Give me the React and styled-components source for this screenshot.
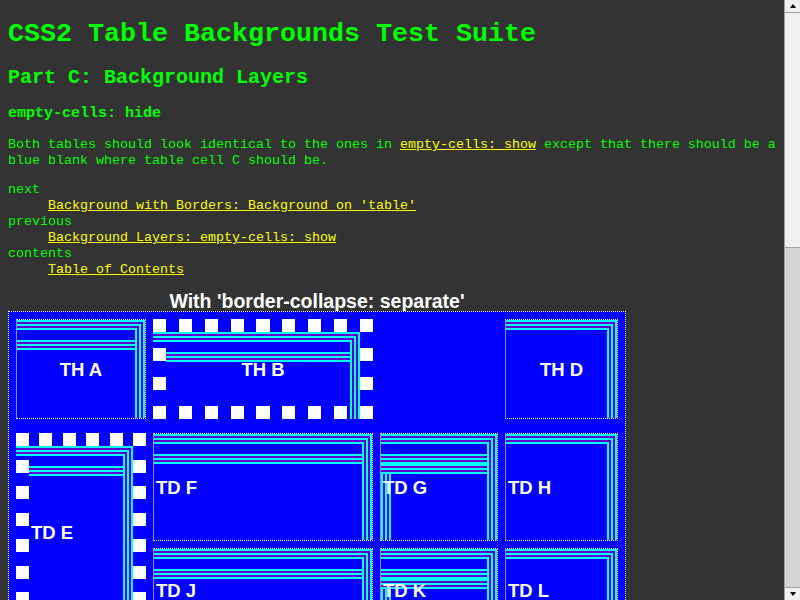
import React from 'react'
import styled, { createGlobalStyle, css } from 'styled-components'

const CYAN = '#00ffff'
const PURPLE = '#6000d0'

// five 2px stripes, cyan / purple, running in the given direction
const stripes = (dir) =>
  `linear-gradient(${dir}, ${CYAN} 0 2px, ${PURPLE} 2px 4px, ${CYAN} 4px 6px, ${PURPLE} 6px 8px, ${CYAN} 8px 10px)`

// nested L in the top-right corner of the padding box
const cornerShadow = `inset -2px 2px 0 ${CYAN}, inset -4px 4px 0 ${PURPLE}, inset -6px 6px 0 ${CYAN}, inset -8px 8px 0 ${PURPLE}, inset -10px 10px 0 ${CYAN}`

const GlobalStyle = createGlobalStyle`
  html, body {
    background: #333;
    overflow: hidden;
  }
  body {
    margin: 8px 24px 8px 8px;
    color: #00ff00;
    font-family: "Liberation Mono", "Courier New", monospace;
    font-size: 13.3333px;
    line-height: 16px;
  }
`

const Title = styled.h1`
  font-size: 26.6667px;
  line-height: 30px;
  margin: 11px 0 17px;
`

const Subtitle = styled.h2`
  font-size: 20px;
  line-height: 23px;
  margin: 0 0 16px;
`

const Section = styled.h3`
  font-size: 15px;
  line-height: 17px;
  margin: 0 0 15px;
`

const Para = styled.p`
  margin: 0 0 13px;
`

const Link = styled.a`
  color: #ffff00;
  text-decoration: underline;
`

const Nav = styled.dl`
  margin: 0 0 13px;
`

const Term = styled.dt``

const Desc = styled.dd`
  margin-left: 40px;
`

const TableBlock = styled.div`
  display: flex;
  flex-direction: column;
  width: max-content;
  margin-bottom: 24px;
`

const Caption = styled.div`
  color: #fff;
  font: bold 19.5px/20px "Liberation Sans", Arial, sans-serif;
  text-align: center;
`

const Table = styled.div`
  display: grid;
  grid-template-columns: 130px 220px 118px 113px;
  grid-template-rows: 107px 108px 84px;
  gap: ${(p) => (p.$collapse ? '0' : '7px')};
  padding: ${(p) => (p.$collapse ? '0' : '7px')};
  border: 1px dotted #fff;
  background: #0000ff;
`

const squares = (w, h, nx, ny) => {
  const px = (w - 13) / (nx - 1)
  const py = (h - 13) / (ny - 1)
  const row = `repeating-linear-gradient(to right, #fff 0 13px, transparent 13px ${px}px)`
  const col = `repeating-linear-gradient(to bottom, #fff 0 13px, transparent 13px ${py}px)`
  return `${row} 0 0 / 100% 13px no-repeat border-box,
    ${row} 0 100% / 100% 13px no-repeat border-box,
    ${col} 0 0 / 13px 100% no-repeat border-box,
    ${col} 100% 0 / 13px 100% no-repeat border-box,
    ${stripes('to bottom')} 0 13px / 13px 10px no-repeat border-box,
    ${stripes('to left')} calc(100% - 13px) 100% / 10px 13px no-repeat border-box,
    ${stripes('to bottom')} 0 20px / 100% 10px no-repeat padding-box`
}

const Cell = styled.div`
  box-sizing: border-box;
  display: flex;
  align-items: center;
  justify-content: ${(p) => (p.$head ? 'center' : 'flex-start')};
  padding: 0 2px;
  color: #fff;
  font: bold 18.5px/21px "Liberation Sans", Arial, sans-serif;
  border: 1px dotted #fff;
  border-left: 1px solid #8c8cff;
  box-shadow: ${cornerShadow};
  ${(p) => p.$head && css`
    align-self: start;
    height: 100px;
  `}
  ${(p) => p.$span && css`
    grid-row: span 2;
  `}
  ${(p) => p.$layer === 'band' && css`
    background: ${stripes('to bottom')} 0 20px / 100% 10px no-repeat;
  `}
  ${(p) => p.$layer === 'hook' && css`
    background:
      ${stripes('to bottom')} 0 30px / 100% 10px no-repeat,
      ${stripes('to right')} 0 30px / 10px calc(100% - 30px) no-repeat,
      ${stripes('to bottom')} 0 20px / 100% 10px no-repeat;
  `}
  ${(p) => p.$squares && css`
    border: 13px solid transparent;
    background: ${squares(p.$squares[0], p.$squares[1], p.$squares[2], p.$squares[3])};
  `}
`

const Hidden = styled.div``

// stand-in for the browser's classic vertical scrollbar
const ScrollBar = styled.div`
  position: fixed;
  top: 0;
  right: 0;
  width: 16px;
  height: 100vh;
  box-sizing: border-box;
  display: flex;
  flex-direction: column;
  background: #d4d4d4;
  border-left: 1px solid #a0a0a0;
`

const ScrollButton = styled.div`
  flex: none;
  height: 13px;
  box-sizing: border-box;
  display: flex;
  align-items: center;
  justify-content: center;
  background: #f0f0f0;
  border-top: ${(p) => (p.$down ? '1px solid #a0a0a0' : '0')};
  border-bottom: ${(p) => (p.$down ? '0' : '1px solid #a0a0a0')};
`

const Arrow = styled.span`
  width: 0;
  height: 0;
  border-left: 3.5px solid transparent;
  border-right: 3.5px solid transparent;
  ${(p) => (p.$down ? 'border-top: 4px solid #000;' : 'border-bottom: 4px solid #000;')}
`

const Thumb = styled.div`
  flex: none;
  height: 235px;
  box-sizing: border-box;
  background: #f0f0f0;
  border-bottom: 1px solid #a0a0a0;
`

const Track = styled.div`
  flex: 1;
`

function BackgroundTable({ caption, collapse }) {
  return (
    <TableBlock>
      <Caption>{caption}</Caption>
      <Table $collapse={collapse}>
        <Cell $head $layer="band">TH A</Cell>
        <Cell $head $squares={[220, 100, 9, 4]}>TH B</Cell>
        <Hidden />
        <Cell $head>TH D</Cell>
        <Cell $span $squares={[130, 199, 6, 8]}>TD E</Cell>
        <Cell $layer="band">TD F</Cell>
        <Cell $layer="hook">TD G</Cell>
        <Cell>TD H</Cell>
        <Cell $layer="band">TD J</Cell>
        <Cell $layer="hook">TD K</Cell>
        <Cell>TD L</Cell>
      </Table>
    </TableBlock>
  )
}

export default function App() {
  return (
    <>
      <GlobalStyle />
      <Title>CSS2 Table Backgrounds Test Suite</Title>
      <Subtitle>Part C: Background Layers</Subtitle>
      <Section>empty-cells: hide</Section>
      <Para>
        Both tables should look identical to the ones in <Link href="#">empty-cells: show</Link> except
        that there should be a blue blank where table cell C should be.
      </Para>
      <Nav>
        <Term>next</Term>
        <Desc><Link href="#">Background with Borders: Background on 'table'</Link></Desc>
        <Term>previous</Term>
        <Desc><Link href="#">Background Layers: empty-cells: show</Link></Desc>
        <Term>contents</Term>
        <Desc><Link href="#">Table of Contents</Link></Desc>
      </Nav>
      <BackgroundTable caption="With 'border-collapse: separate'" />
      <BackgroundTable caption="With 'border-collapse: collapse'" collapse />
      <ScrollBar>
        <ScrollButton><Arrow /></ScrollButton>
        <Thumb />
        <Track />
        <ScrollButton $down><Arrow $down /></ScrollButton>
      </ScrollBar>
    </>
  )
}
